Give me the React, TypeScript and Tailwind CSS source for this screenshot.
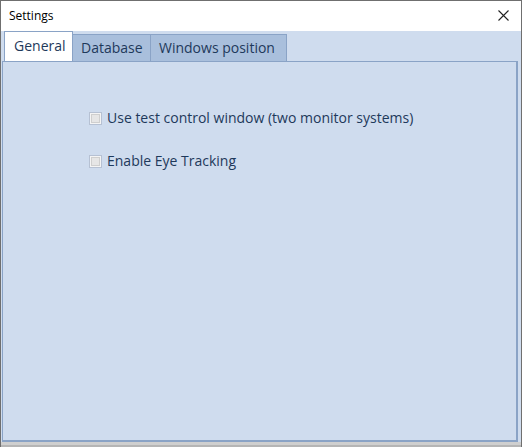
import React from "react";

function Check({ label }: { label: string }) {
  return (
    <div className="flex items-center h-[20px]">
      <div className="w-[13px] h-[13px] border border-[#b6c1d3] bg-[#f4f4f4] flex items-center justify-center">
        <div className="w-[9px] h-[9px] border border-[#cfcfcf] bg-[#e6e6e6]" />
      </div>
      <span className="ml-[5px] text-[14px] leading-[20px] text-[#1e395b]">{label}</span>
    </div>
  );
}

export default function App() {
  return (
    <div
      className="w-[522px] h-[447px] flex flex-col border-x border-t border-[#6f6f6f] bg-[#cfdcee] overflow-hidden"
      style={{ fontFamily: '"Segoe UI", "Open Sans", "Noto Sans", sans-serif' }}
    >
      <div className="h-[30px] bg-white flex items-center justify-between pl-[8px] pr-[12px] shrink-0">
        <span className="text-[12px] text-black leading-none">Settings</span>
        <svg width="11" height="11" viewBox="0 0 11 11" className="mt-[-2px]">
          <path d="M0.5 0.5 L10.5 10.5 M10.5 0.5 L0.5 10.5" stroke="#222" strokeWidth="1.1" />
        </svg>
      </div>
      <div className="h-[30px] flex items-end pl-[3px] shrink-0">
        <div className="h-[30px] w-[69px] bg-white border-x border-t border-[#8aa3c6] flex items-center pl-[9px] pb-[2px] text-[14px] text-[#1e395b]">
          General
        </div>
        <div className="h-[27px] w-[78px] bg-[#a9bfdc] border-t border-r border-[#8aa3c6] flex items-center pl-[8px] pb-[1px] text-[14px] text-[#1e395b]">
          Database
        </div>
        <div className="h-[27px] w-[136px] bg-[#a9bfdc] border-t border-r border-[#8aa3c6] flex items-center pl-[8px] pb-[1px] text-[14px] text-[#1e395b]">
          Windows position
        </div>
      </div>
      <div className="ml-[1px] w-[516px] h-[381px] border-l border-t border-r-[2px] border-b-[2px] border-[#8aa3c6] shrink-0 pl-[86px] pt-[46px] flex flex-col gap-[23px]">
        <Check label="Use test control window (two monitor systems)" />
        <Check label="Enable Eye Tracking" />
      </div>
      <div className="flex-1 bg-[#cfcfcf] border-b-[2px] border-[#b5b5b5]" />
    </div>
  );
}
